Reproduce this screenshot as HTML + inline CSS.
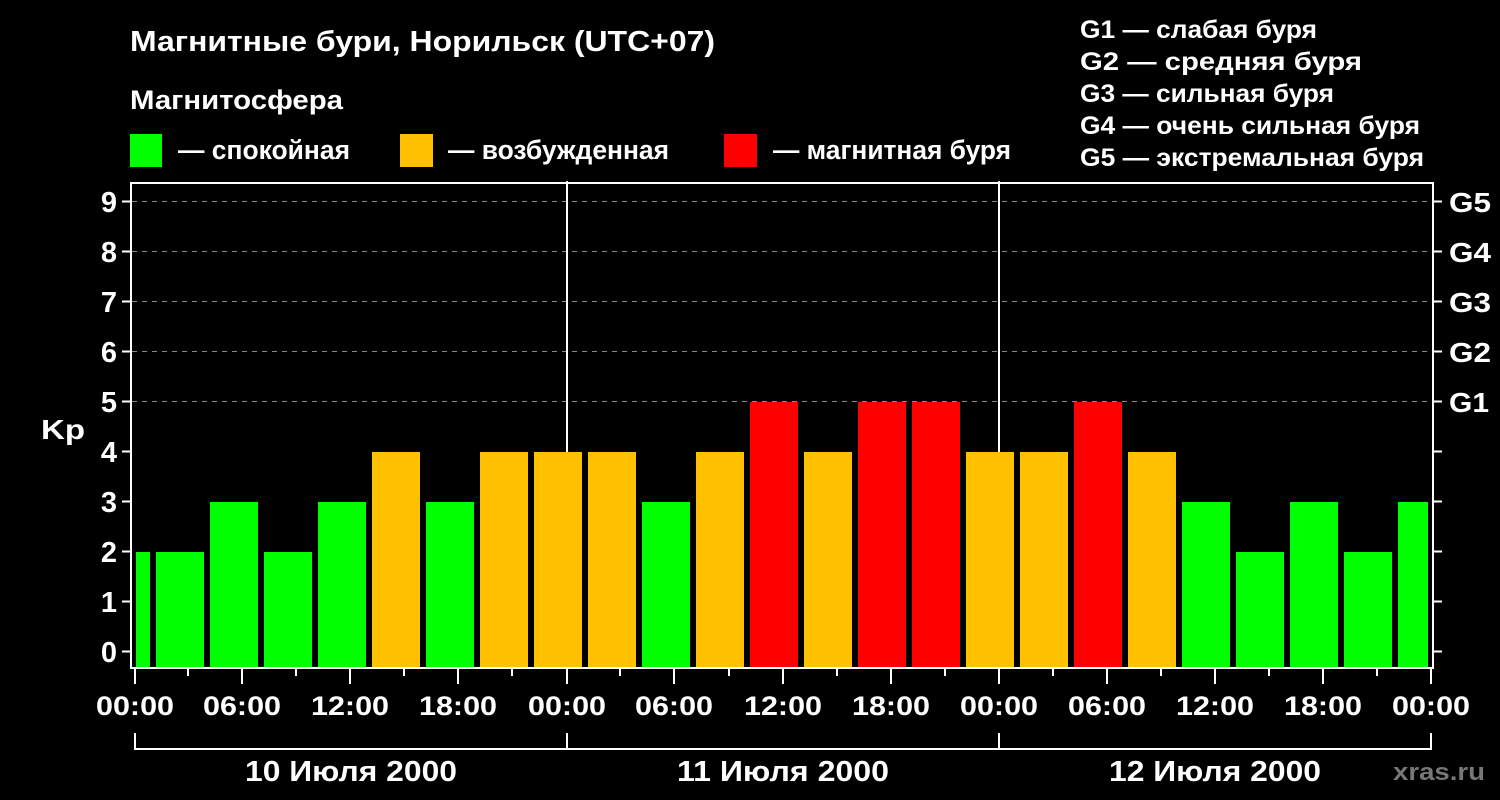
<!DOCTYPE html>
<html><head><meta charset="utf-8"><style>
html,body{margin:0;padding:0;background:#000;width:1500px;height:800px;overflow:hidden}
svg{display:block}
text{font-family:"Liberation Sans",sans-serif;font-weight:bold;fill:#fff}
</style></head><body>
<svg width="1500" height="800" xmlns="http://www.w3.org/2000/svg">
<rect width="1500" height="800" fill="#000"/>
<text x="130" y="51" font-size="29" textLength="585" lengthAdjust="spacingAndGlyphs">Магнитные бури, Норильск (UTC+07)</text>
<text x="130" y="109" font-size="27" textLength="213" lengthAdjust="spacingAndGlyphs">Магнитосфера</text>
<rect x="130" y="134" width="32" height="33" fill="#00ff00"/>
<text x="178" y="159" font-size="27" textLength="172" lengthAdjust="spacingAndGlyphs">— спокойная</text>
<rect x="400" y="134" width="33" height="33" fill="#ffc000"/>
<text x="448" y="159" font-size="27" textLength="221" lengthAdjust="spacingAndGlyphs">— возбужденная</text>
<rect x="724" y="134" width="33" height="33" fill="#ff0000"/>
<text x="773" y="159" font-size="27" textLength="238" lengthAdjust="spacingAndGlyphs">— магнитная буря</text>
<g font-size="25">
<text x="1080" y="38" textLength="237" lengthAdjust="spacingAndGlyphs">G1 — слабая буря</text>
<text x="1080" y="70" textLength="282" lengthAdjust="spacingAndGlyphs">G2 — средняя буря</text>
<text x="1080" y="102" textLength="254" lengthAdjust="spacingAndGlyphs">G3 — сильная буря</text>
<text x="1080" y="134" textLength="340" lengthAdjust="spacingAndGlyphs">G4 — очень сильная буря</text>
<text x="1080" y="166" textLength="344" lengthAdjust="spacingAndGlyphs">G5 — экстремальная буря</text>
</g>
<g stroke="#888" stroke-width="1" stroke-dasharray="5,5">
<line x1="132" y1="201.5" x2="1432" y2="201.5"/>
<line x1="132" y1="251.5" x2="1432" y2="251.5"/>
<line x1="132" y1="301.5" x2="1432" y2="301.5"/>
<line x1="132" y1="351.5" x2="1432" y2="351.5"/>
<line x1="132" y1="401.5" x2="1432" y2="401.5"/>
</g>
<g stroke="#fff" stroke-width="2">
<line x1="567" y1="181" x2="567" y2="668"/>
<line x1="999" y1="181" x2="999" y2="668"/>
</g>
<g>
<rect x="136" y="552" width="14" height="115" fill="#00ff00"/>
<rect x="156" y="552" width="48" height="115" fill="#00ff00"/>
<rect x="210" y="502" width="48" height="165" fill="#00ff00"/>
<rect x="264" y="552" width="48" height="115" fill="#00ff00"/>
<rect x="318" y="502" width="48" height="165" fill="#00ff00"/>
<rect x="372" y="452" width="48" height="215" fill="#ffc000"/>
<rect x="426" y="502" width="48" height="165" fill="#00ff00"/>
<rect x="480" y="452" width="48" height="215" fill="#ffc000"/>
<rect x="534" y="452" width="48" height="215" fill="#ffc000"/>
<rect x="588" y="452" width="48" height="215" fill="#ffc000"/>
<rect x="642" y="502" width="48" height="165" fill="#00ff00"/>
<rect x="696" y="452" width="48" height="215" fill="#ffc000"/>
<rect x="750" y="402" width="48" height="265" fill="#ff0000"/>
<rect x="804" y="452" width="48" height="215" fill="#ffc000"/>
<rect x="858" y="402" width="48" height="265" fill="#ff0000"/>
<rect x="912" y="402" width="48" height="265" fill="#ff0000"/>
<rect x="966" y="452" width="48" height="215" fill="#ffc000"/>
<rect x="1020" y="452" width="48" height="215" fill="#ffc000"/>
<rect x="1074" y="402" width="48" height="265" fill="#ff0000"/>
<rect x="1128" y="452" width="48" height="215" fill="#ffc000"/>
<rect x="1182" y="502" width="48" height="165" fill="#00ff00"/>
<rect x="1236" y="552" width="48" height="115" fill="#00ff00"/>
<rect x="1290" y="502" width="48" height="165" fill="#00ff00"/>
<rect x="1344" y="552" width="48" height="115" fill="#00ff00"/>
<rect x="1398" y="502" width="30" height="165" fill="#00ff00"/>
</g>
<g stroke="#fff" stroke-width="2" fill="none">
<rect x="131" y="183" width="1302" height="485"/>
<path d="M122 201.5h9M122 251.5h9M122 301.5h9M122 351.5h9M122 401.5h9M122 451.5h9M122 501.5h9M122 551.5h9M122 601.5h9M122 651.5h9"/>
<path d="M1433 201.5h9M1433 251.5h9M1433 301.5h9M1433 351.5h9M1433 401.5h9M1433 451.5h9M1433 501.5h9M1433 551.5h9M1433 601.5h9M1433 651.5h9"/>
<path d="M135 668v16M188 668v8M242 668v16M296 668v8M350 668v16M404 668v8M458 668v16M512 668v8M567 668v16M620 668v8M674 668v16M729 668v8M783 668v16M837 668v8M891 668v16M945 668v8M999 668v16M1053 668v8M1107 668v16M1161 668v8M1215 668v16M1269 668v8M1323 668v16M1377 668v8M1431 668v16"/>
<path d="M135 733v16h1296v-16M567 733v16M999 733v16"/>
</g>
<g font-size="29" text-anchor="end">
<text x="117" y="212">9</text><text x="117" y="262">8</text><text x="117" y="312">7</text><text x="117" y="362">6</text><text x="117" y="412">5</text><text x="117" y="462">4</text><text x="117" y="512">3</text><text x="117" y="562">2</text><text x="117" y="612">1</text><text x="117" y="662">0</text>
</g>
<text x="41" y="439" font-size="28" textLength="44" lengthAdjust="spacingAndGlyphs">Kp</text>
<g font-size="28">
<text x="1449" y="212" textLength="42" lengthAdjust="spacingAndGlyphs">G5</text><text x="1449" y="262" textLength="42" lengthAdjust="spacingAndGlyphs">G4</text><text x="1449" y="312" textLength="42" lengthAdjust="spacingAndGlyphs">G3</text><text x="1449" y="362" textLength="42" lengthAdjust="spacingAndGlyphs">G2</text><text x="1449" y="412" textLength="40" lengthAdjust="spacingAndGlyphs">G1</text>
</g>
<g font-size="27" text-anchor="middle">
<text x="135" y="715" textLength="78" lengthAdjust="spacingAndGlyphs">00:00</text><text x="242" y="715" textLength="78" lengthAdjust="spacingAndGlyphs">06:00</text><text x="350" y="715" textLength="78" lengthAdjust="spacingAndGlyphs">12:00</text><text x="458" y="715" textLength="78" lengthAdjust="spacingAndGlyphs">18:00</text>
<text x="567" y="715" textLength="78" lengthAdjust="spacingAndGlyphs">00:00</text><text x="674" y="715" textLength="78" lengthAdjust="spacingAndGlyphs">06:00</text><text x="783" y="715" textLength="78" lengthAdjust="spacingAndGlyphs">12:00</text><text x="891" y="715" textLength="78" lengthAdjust="spacingAndGlyphs">18:00</text>
<text x="999" y="715" textLength="78" lengthAdjust="spacingAndGlyphs">00:00</text><text x="1107" y="715" textLength="78" lengthAdjust="spacingAndGlyphs">06:00</text><text x="1215" y="715" textLength="78" lengthAdjust="spacingAndGlyphs">12:00</text><text x="1323" y="715" textLength="78" lengthAdjust="spacingAndGlyphs">18:00</text>
<text x="1431" y="715" textLength="78" lengthAdjust="spacingAndGlyphs">00:00</text>
<text x="351" y="781" font-size="29" textLength="212" lengthAdjust="spacingAndGlyphs">10 Июля 2000</text>
<text x="783" y="781" font-size="29" textLength="212" lengthAdjust="spacingAndGlyphs">11 Июля 2000</text>
<text x="1215" y="781" font-size="29" textLength="212" lengthAdjust="spacingAndGlyphs">12 Июля 2000</text>
</g>
<text x="1393" y="780" font-size="24" style="fill:#777" textLength="92" lengthAdjust="spacingAndGlyphs">xras.ru</text>
</svg>
</body></html>
